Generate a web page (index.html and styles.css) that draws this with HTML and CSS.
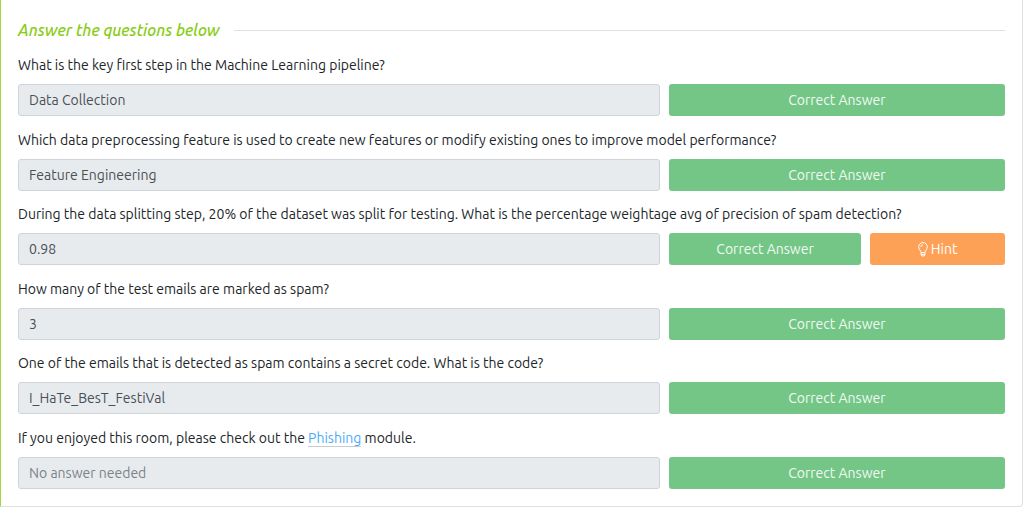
FILE: index.html
```html
<!DOCTYPE html>
<html lang="en">
	<head>
		<meta charset="UTF-8" />
		<meta name="viewport" content="width=device-width, initial-scale=1" />
		<title>Answer the questions below</title>
		<link rel="stylesheet" href="styles.css">
	</head>
	<body>
		<main class="task">
			<h2 class="task-title">Answer the questions below</h2>

			<form class="questions">
				<div class="question">
					<label for="answer-1">What is the key first step in the Machine Learning pipeline?</label>
					<div class="answer-row">
						<input type="text" id="answer-1" value="Data Collection" disabled />
						<div class="actions">
							<button type="button" class="btn btn-correct">Correct Answer</button>
						</div>
					</div>
				</div>

				<div class="question">
					<label for="answer-2">Which data preprocessing feature is used to create new features or modify existing ones to improve model performance?</label>
					<div class="answer-row">
						<input type="text" id="answer-2" value="Feature Engineering" disabled />
						<div class="actions">
							<button type="button" class="btn btn-correct">Correct Answer</button>
						</div>
					</div>
				</div>

				<div class="question">
					<label for="answer-3">During the data splitting step, 20% of the dataset was split for testing. What is the percentage weightage avg of precision of spam detection?</label>
					<div class="answer-row">
						<input type="text" id="answer-3" value="0.98" disabled />
						<div class="actions">
							<button type="button" class="btn btn-correct">Correct Answer</button>
							<button type="button" class="btn btn-hint">
								<svg class="bulb" viewBox="0 0 10 15" aria-hidden="true">
									<path d="M3 10.5C3 8.5 .7 7.6 .7 4.9a4.3 4.3 0 0 1 8.6 0C9.3 7.6 7 8.5 7 10.5z" />
									<path d="M3 10.5v2L4 14h2l1-1.5v-2M3 12.3h4M2.8 5A2.2 2.2 0 0 1 5 2.8" />
								</svg>
								Hint
							</button>
						</div>
					</div>
				</div>

				<div class="question">
					<label for="answer-4">How many of the test emails are marked as spam?</label>
					<div class="answer-row">
						<input type="text" id="answer-4" value="3" disabled />
						<div class="actions">
							<button type="button" class="btn btn-correct">Correct Answer</button>
						</div>
					</div>
				</div>

				<div class="question">
					<label for="answer-5">One of the emails that is detected as spam contains a secret code. What is the code?</label>
					<div class="answer-row">
						<input type="text" id="answer-5" value="I_HaTe_BesT_FestiVal" disabled />
						<div class="actions">
							<button type="button" class="btn btn-correct">Correct Answer</button>
						</div>
					</div>
				</div>

				<div class="question">
					<label for="answer-6">If you enjoyed this room, please check out the <a href="#phishing">Phishing</a> module.</label>
					<div class="answer-row">
						<input type="text" id="answer-6" placeholder="No answer needed" disabled />
						<div class="actions">
							<button type="button" class="btn btn-correct">Correct Answer</button>
						</div>
					</div>
				</div>
			</form>
		</main>
	</body>
</html>
```

FILE: styles.css
```css
* {
	box-sizing: border-box;
}
body {
	margin: 0;
	font-family: Ubuntu, "Noto Sans", sans-serif;
	font-size: 14px;
	line-height: 20px;
	color: #212529;
	background-color: #fff;
}
.task {
	display: flex;
	flex-direction: column;
	min-height: 100vh;
	padding: 20px 17px 17px;
	border: 1px solid #dfe1e3;
	border-top: none;
	border-left-color: #a3d63f;
	border-radius: 0 0 4px 0;
	margin-right: 1px;
}

/* Heading with a rule to the right */
.task-title {
	display: flex;
	align-items: center;
	gap: 14px;
	margin: 0 0 15px;
	font-size: 16px;
	font-weight: 500;
	font-style: italic;
	line-height: 20px;
	color: #88cc14;
}
.task-title::after {
	content: "";
	flex: 1;
	height: 1px;
	background-color: #dfe0e1;
}

.questions {
	flex: 1;
	display: flex;
	flex-direction: column;
	justify-content: space-between;
	gap: 12px;
}
.question {
	display: flex;
	flex-direction: column;
	gap: 9px;
}
.question a {
	color: #4dabf7;
	text-decoration: none;
	border-bottom: 1px solid #c8ccd0;
}
.answer-row {
	display: grid;
	grid-template-columns: 21fr 11fr;
	gap: 9px;
}
.answer-row input {
	width: 100%;
	min-width: 0;
	height: 32px;
	padding: 0 10px;
	font: inherit;
	color: #495057;
	background-color: #e8ebed;
	border: 1px solid #ced4da;
	border-radius: 3px;
}
.answer-row input::placeholder {
	color: #7b8289;
}
.actions {
	display: flex;
	gap: 9px;
}

.btn {
	display: flex;
	align-items: center;
	justify-content: center;
	gap: 3px;
	height: 32px;
	padding: 0;
	font: inherit;
	color: #fff;
	border: none;
	border-radius: 3px;
	cursor: pointer;
}
.btn-correct {
	flex: 10 1 0;
	color: #f1faf3;
	background-color: #74c686;
}
.btn-hint {
	flex: 7 1 0;
	background-color: #fda157;
}
.bulb {
	width: 10px;
	height: 15px;
	fill: none;
	stroke: #fff;
	stroke-width: 1;
	stroke-linejoin: round;
}
```
